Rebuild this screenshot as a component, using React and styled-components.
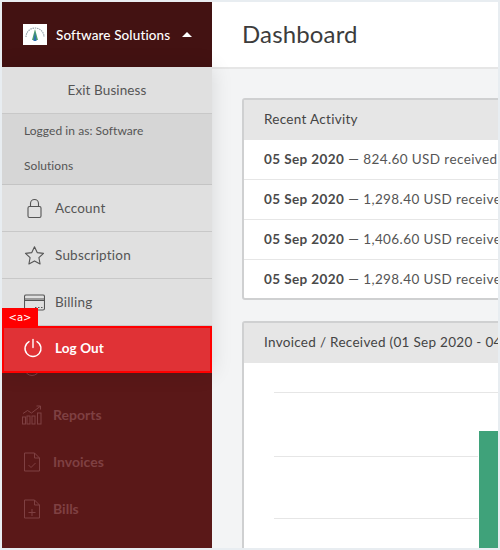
import React from "react";
import styled, { createGlobalStyle } from "styled-components";

const Global = createGlobalStyle`
  html, body { margin: 0; padding: 0; }
  body { font-family: "Lato", "Liberation Sans", sans-serif; }
  * { box-sizing: border-box; }
`;

const Frame = styled.div`
  width: 500px;
  height: 550px;
  border: 2px solid #e8edf1;
  display: flex;
  overflow: hidden;
  background: #f3f4f5;
`;

const Sidebar = styled.aside`
  position: relative;
  width: 210px;
  flex: none;
  background: #5a1818;
  display: flex;
  flex-direction: column;
`;

const Brand = styled.div`
  height: 65px;
  flex: none;
  background: #431212;
  color: #fff;
  display: flex;
  align-items: center;
  padding-left: 21px;
  font-size: 13.5px;
  font-weight: 500;
  letter-spacing: 0.12px;
`;

const Logo = styled.svg`
  width: 24px;
  height: 21px;
  background: #fff;
  margin-right: 9px;
  flex: none;
`;

const Caret = styled.span`
  width: 0;
  height: 0;
  margin-left: 12px;
  border-left: 5px solid transparent;
  border-right: 5px solid transparent;
  border-bottom: 5px solid #fff;
`;

const Nav = styled.nav`
  padding-top: 277px;
  display: flex;
  flex-direction: column;
`;

const NavItem = styled.div`
  height: 47px;
  flex: none;
  display: flex;
  align-items: center;
  padding-left: 20px;
  color: #7f4042;
  font-size: 14px;
  font-weight: 700;
  gap: 11px;
  svg { width: 20px; height: 20px; flex: none; }
`;

const Menu = styled.div`
  position: absolute;
  top: 65px;
  left: 0;
  width: 210px;
  display: flex;
  flex-direction: column;
  background: #e0e0e0;
  box-shadow: 0 0 20px rgba(0, 0, 0, 0.12);
`;

const Exit = styled.div`
  height: 47px;
  display: flex;
  align-items: center;
  justify-content: center;
  color: #555;
  font-size: 13.5px;
  letter-spacing: 0.1px;
  border-bottom: 1px solid #c8c8c8;
`;

const Logged = styled.div`
  height: 71px;
  background: #d6d6d6;
  color: #555;
  font-size: 12px;
  line-height: 35px;
  padding-left: 22px;
  padding-right: 40px;
  letter-spacing: 0.05px;
  border-bottom: 1px solid #c4c4c4;
`;

const LoggedText = styled.div`
  margin-top: -1px;
`;

const MenuItem = styled.div`
  height: 47px;
  display: flex;
  align-items: center;
  padding-left: 22px;
  gap: 10px;
  color: #555;
  font-size: 13.5px;
  letter-spacing: 0.2px;
  border-bottom: 1px solid #c8c8c8;
  svg { width: 21px; height: 21px; flex: none; }
`;

const LogOut = styled.a`
  position: relative;
  height: 47px;
  display: flex;
  align-items: center;
  padding: 0 0 3px 19px;
  gap: 12px;
  background: #e03236;
  color: #fff;
  font-size: 13.5px;
  font-weight: 700;
  letter-spacing: 0.1px;
  border: 2px solid #ff0000;
  svg { width: 20px; height: 20px; flex: none; }
`;

const Tag = styled.span`
  position: absolute;
  left: -2px;
  top: -20px;
  width: 36px;
  height: 18px;
  background: #ff0000;
  color: #fff;
  font-family: "DejaVu Sans", sans-serif;
  font-size: 10px;
  font-weight: 400;
  display: flex;
  align-items: center;
  justify-content: center;
`;

const Main = styled.main`
  flex: 1;
  min-width: 0;
  display: flex;
  flex-direction: column;
`;

const Header = styled.header`
  height: 67px;
  flex: none;
  background: #fff;
  border-bottom: 2px solid #e6e6e6;
  display: flex;
  align-items: center;
  padding-left: 30px;
  padding-bottom: 2px;
  color: #3c3c3c;
  font-size: 24px;
  font-weight: 400;
  letter-spacing: 0.15px;
`;

const Content = styled.div`
  padding: 29px 0 0 30px;
  display: flex;
  flex-direction: column;
  gap: 21px;
  width: 560px;
`;

const Card = styled.section`
  border: 2px solid #cfd0d1;
  border-radius: 3px;
  background: #fff;
  flex: none;
`;

const CardHead = styled.div`
  height: 40px;
  background: #e6e6e6;
  display: flex;
  align-items: center;
  padding: 0 0 2px 20px;
  color: #444;
  font-size: 13.5px;
  letter-spacing: 0.3px;
  white-space: nowrap;
`;

const Row = styled.div`
  height: 40px;
  display: flex;
  align-items: center;
  padding: 0 0 1px 20px;
  color: #555;
  font-size: 13.5px;
  letter-spacing: 0.4px;
  white-space: nowrap;
  border-bottom: 1px solid #e6e6e6;
  &:last-child { border-bottom: none; height: 38px; }
  b { color: #4a4a4a; font-weight: 700; margin-right: 4px; }
`;

const Chart = styled.svg`
  display: block;
  width: 526px;
  height: 186px;
`;

const rows = [
  "824.60 USD received",
  "1,298.40 USD received",
  "1,406.60 USD received",
  "1,298.40 USD received",
];

const Lock = () => (
  <svg viewBox="0 0 21 21" fill="none" stroke="#555" strokeWidth="1.1">
    <rect x="4" y="8.5" width="13" height="11" rx="1.5" />
    <path d="M6.5 8.5V5.5a4 4 0 0 1 8 0v3" />
  </svg>
);
const Star = () => (
  <svg viewBox="0 0 21 21" fill="none" stroke="#555" strokeWidth="1.1" strokeLinejoin="round">
    <path d="M10.5 1.8l2.7 5.8 6.3.8-4.6 4.3 1.2 6.3-5.6-3.1-5.6 3.1 1.2-6.3L1.5 8.4l6.3-.8z" />
  </svg>
);
const Card2 = () => (
  <svg viewBox="0 0 21 21" fill="none" stroke="#555" strokeWidth="1.1">
    <rect x="0.5" y="3" width="20" height="15" rx="1.5" />
    <path d="M0.5 7h20M0.5 8.5h20" />
    <path d="M11 15.5h1.5M14 15.5h1.5M17 15.5h1.5" strokeWidth="1.2" />
  </svg>
);
const Power = () => (
  <svg viewBox="0 0 20 20" fill="none" stroke="#fff" strokeWidth="1.4" strokeLinecap="round">
    <path d="M6 3.6a8 8 0 1 0 8 0" />
    <path d="M10 1.5v8" />
  </svg>
);
const Ring = () => (
  <svg viewBox="0 0 20 20" fill="none" stroke="#7f4042" strokeWidth="1">
    <circle cx="10" cy="10" r="7.5" />
  </svg>
);
const Bars = () => (
  <svg viewBox="0 0 20 20" fill="none" stroke="#7f4042" strokeWidth="1">
    <rect x="0.5" y="12" width="3" height="7" />
    <rect x="5" y="11" width="3" height="8" />
    <rect x="10" y="11" width="3" height="8" />
    <rect x="15.5" y="8" width="3.5" height="11" />
    <path d="M1 8.5l4.5-3 4 2.5L18 1.5M14.5 1h4v3.5" />
  </svg>
);
const FileBase = ({ children }) => (
  <svg viewBox="0 0 20 20" fill="none" stroke="#7f4042" strokeWidth="1">
    <path d="M2.5 1h10l5 5v13h-15zM12.5 1v5h5" />
    {children}
  </svg>
);

export default function App() {
  return (
    <>
      <Global />
      <Frame>
        <Sidebar>
          <Brand>
            <Logo viewBox="0 0 24 21">
              <path d="M3 13a9 9 0 0 1 18 0" fill="none" stroke="#9aa7ad" strokeWidth="1.2" strokeDasharray="1.5 .8" />
              <path d="M12 5l3 11H9z" fill="#4fa06a" />
              <path d="M12 8l1.6 9h-3.2z" fill="#2f6fb0" />
            </Logo>
            Software Solutions
            <Caret />
          </Brand>
          <Nav>
            <NavItem><Ring /></NavItem>
            <NavItem><Bars />Reports</NavItem>
            <NavItem><FileBase><path d="M6.5 13l2.5 2.5 4.5-4.5" /></FileBase>Invoices</NavItem>
            <NavItem><FileBase><path d="M10 10v7M6.5 13.5h7" /></FileBase>Bills</NavItem>
          </Nav>
          <Menu>
            <Exit>Exit Business</Exit>
            <Logged><LoggedText>Logged in as: Software Solutions</LoggedText></Logged>
            <MenuItem><Lock />Account</MenuItem>
            <MenuItem><Star />Subscription</MenuItem>
            <MenuItem><Card2 />Billing</MenuItem>
            <LogOut><Tag>&lt;a&gt;</Tag><Power />Log Out</LogOut>
          </Menu>
        </Sidebar>
        <Main>
          <Header>Dashboard</Header>
          <Content>
            <Card>
              <CardHead>Recent Activity</CardHead>
              {rows.map((r, i) => (
                <Row key={i}><b>05 Sep 2020</b>— {r}</Row>
              ))}
            </Card>
            <Card>
              <CardHead>Invoiced / Received (01 Sep 2020 - 04 Sep 2020)</CardHead>
              <Chart viewBox="0 0 526 186">
                <path d="M30 29.5H526M30 93.5H234M30 155.5H234" stroke="#e6e6e6" strokeWidth="1" fill="none" />
                <rect x="235" y="68" width="60" height="118" fill="#3fa27a" />
              </Chart>
            </Card>
          </Content>
        </Main>
      </Frame>
    </>
  );
}
